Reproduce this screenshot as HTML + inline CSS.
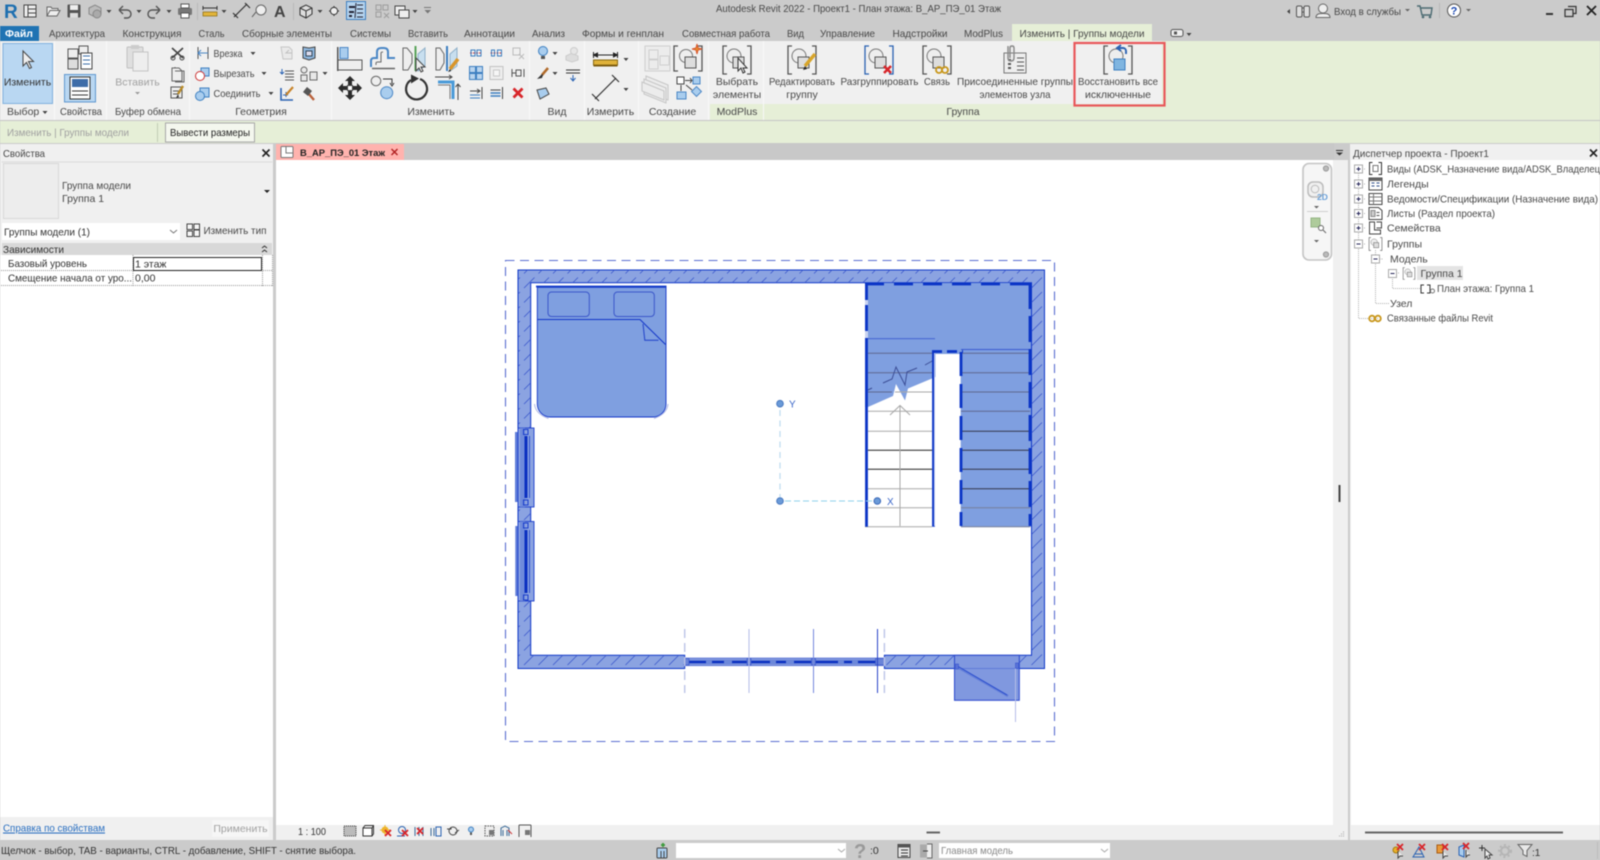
<!DOCTYPE html>
<html lang="ru"><head><meta charset="utf-8"><title>Autodesk Revit 2022</title>
<style>
html,body{margin:0;padding:0;width:1600px;height:860px;overflow:hidden;background:#cbcbcb}
svg{display:block;filter:blur(.4px)}
text{font-family:"Liberation Sans",sans-serif;font-size:10.5px;fill:#484848}
.c{text-anchor:middle}
.g{fill:#a0a0a0}
.ic{fill:none;stroke:#555;stroke-width:1.2}
.bl{fill:#a9cdee;stroke:#4a86c5;stroke-width:1}
.gr{fill:#e4e4e4;stroke:#9a9a9a;stroke-width:1}
.lg{fill:#e8e8e8;stroke:#6a6a6a;stroke-width:1}
.dk{fill:#444}
.tree{font-size:10.5px}
</style></head><body>
<svg width="1600" height="860" viewBox="0 0 1600 860" xmlns="http://www.w3.org/2000/svg">
<defs>
<pattern id="h" width="14.5" height="14.5" patternUnits="userSpaceOnUse"><path d="M2 12.500L12.500 2" stroke="#3552cc" stroke-width=".75"/></pattern>
<g id="grp"><path d="M-10-14h-4v28h4M10-14h4v28h-4" fill="none" stroke="#555" stroke-width="1.3"/><circle cx="-3" cy="-4" r="7" fill="#eee" stroke="#777"/><rect x="-4" y="-3" width="11" height="11" fill="#ddd" stroke="#555"/></g>
<path id="da" d="M-2.5 0h5L0 3z" fill="#444"/>
<g id="plus"><rect x="-4" y="-4" width="8" height="8" fill="#fff" stroke="#aaa"/><path d="M-2 0h4M0-2v4" stroke="#225" stroke-width="1"/></g>
<g id="minus"><rect x="-4" y="-4" width="8" height="8" fill="#fff" stroke="#aaa"/><path d="M-2 0h4" stroke="#225" stroke-width="1"/></g>
<g id="rx"><path d="M-3-3L3 3M3-3L-3 3" stroke="#d8252a" stroke-width="1.8"/></g>
</defs>

<!-- base -->
<rect width="1600" height="860" fill="#cbcbcb"/>
<!-- Title bar -->
<text x="716" y="12" textLength="285" lengthAdjust="spacingAndGlyphs">Autodesk Revit 2022 - Проект1 - План этажа: В_АР_ПЭ_01 Этаж</text>
<!-- Quick access -->
<text x="4" y="18" style="font-size:19px;font-weight:bold;fill:#1d6fb0">R</text>
<g transform="translate(30,11)"><rect x="-6" y="-6" width="12" height="12" fill="#eee" stroke="#444"/><path d="M-2-6v12M-2-2h8M-2 2h8" stroke="#444"/></g>
<path d="M47 16V7h4l1 1.5h6V11M47 16l3-5.5h10l-3 5.5z" fill="#eee" stroke="#666"/>
<g transform="translate(74,11)"><rect x="-6.5" y="-6.5" width="13" height="13" rx="1" fill="#555"/><rect x="-4" y="-6" width="8" height="5" fill="#eee"/><rect x="-4" y="2" width="8" height="4.5" fill="#ddd"/></g>
<g transform="translate(95,11)"><path d="M-6-3l6-3 6 3v6l-6 3-6-3z" fill="#bbb" stroke="#888"/><circle cx="2" cy="3" r="4" fill="#aaa" stroke="#888"/></g>
<use href="#da" x="109" y="10"/>
<path d="M119 10h8a4 4 0 0 1 0 8h-3M119 10l4-4M119 10l4 4" fill="none" stroke="#555" stroke-width="1.4"/><use href="#da" x="139" y="10"/>
<path d="M160 10h-8a4 4 0 0 0 0 8h3M160 10l-4-4M160 10l-4 4" fill="none" stroke="#555" stroke-width="1.4"/><use href="#da" x="169" y="10"/>
<g transform="translate(185,11)"><rect x="-7" y="-3" width="14" height="7" rx="1.5" fill="#777"/><rect x="-4" y="-7" width="8" height="4" fill="#fff" stroke="#555"/><rect x="-4" y="2" width="8" height="5" fill="#fff" stroke="#555"/></g>
<rect x="197" y="3" width="1" height="17" fill="#b8b8b8"/>
<g transform="translate(210,11)"><path d="M-7-3H7M-7-5v4M7-5v4" stroke="#333"/><rect x="-7" y="1" width="14" height="4" fill="#e2b53a" stroke="#8a6a10" stroke-width=".7"/></g><use href="#da" x="224" y="10"/>
<path d="M234 17l13-13M233 13l5 5M245 3l5 5" stroke="#333" stroke-width="1.2" fill="none"/>
<g transform="translate(260,11)"><path d="M-8 6l4-5" stroke="#555"/><circle cx="1" cy="-1" r="5" fill="#eee" stroke="#666"/></g>
<text x="274" y="17" style="font-size:16px;font-weight:bold;fill:#444">A</text>
<rect x="293" y="3" width="1" height="17" fill="#b8b8b8"/>
<g transform="translate(306,11)"><path d="M-6-3L0-6l6 3v6L0 7l-6-3z" fill="#ddd" stroke="#333"/><path d="M-6-3l6 3 6-3M0 0v7" fill="none" stroke="#333"/></g><use href="#da" x="320" y="10"/>
<g transform="translate(334,11)"><path d="M-5 0h10M0-5v10" stroke="#333"/><circle r="3.6" fill="#eee" stroke="#333"/></g>
<rect x="346.5" y="1.5" width="19" height="18" fill="#b5d3ee" stroke="#3d7fc0"/><path d="M349 6h6v2h-6zM349 11h5v2h-5zM349 15h3v2h-3z" fill="#223"/><path d="M357 5h6M357 9h6M357 13h6M357 17h6M356 3l-1 15" stroke="#223" fill="none"/>
<g transform="translate(382,11)" opacity=".55"><rect x="-6" y="-6" width="5" height="5" fill="#ccc" stroke="#777"/><rect x="1" y="-6" width="5" height="5" fill="#ccc" stroke="#777"/><rect x="-6" y="1" width="5" height="5" fill="#ccc" stroke="#777"/><path d="M2 2l5 5M7 2l-5 5" stroke="#777"/></g>
<g transform="translate(402,11)"><rect x="-7" y="-5" width="10" height="9" fill="#eee" stroke="#444"/><rect x="-3" y="-1" width="10" height="8" fill="#eee" stroke="#444"/></g><use href="#da" x="415" y="10"/>
<path d="M424 7h7v1h-7z" fill="#777"/><path d="M424.5 10h6.5l-3.3 3.5z" fill="#777"/>

<!-- Top-right -->
<path d="M1290 9l-3 2.5 3 2.5z" fill="#444"/>
<g transform="translate(1303,11)" fill="#ddd" stroke="#555"><rect x="-6.5" y="-5" width="5.5" height="11" rx="1.5"/><rect x="1" y="-5" width="5.5" height="11" rx="1.5"/><rect x="-1" y="-3" width="2" height="4"/></g>
<g transform="translate(1323,11)"><circle cy="-2.5" r="4.5" fill="#eee" stroke="#666"/><path d="M-7 6.5c0-4 4-4 7-4s7 0 7 4z" fill="#eee" stroke="#666"/></g>
<text x="1334" y="15" textLength="67" lengthAdjust="spacingAndGlyphs">Вход в службы</text><path d="M1405 9h5l-2.5 2.5z" fill="#666"/>
<g transform="translate(1425,11)"><path d="M-8-5l3 0 2 9h9l1-7h-11" fill="none" stroke="#4c6b72" stroke-width="1.4"/><circle cx="-2" cy="6" r="1.3" fill="#4c6b72"/><circle cx="5" cy="6" r="1.3" fill="#4c6b72"/></g>
<rect x="1439" y="3" width="1" height="15" fill="#b8b8b8"/>
<circle cx="1454" cy="10.5" r="6.5" fill="#fff" stroke="#555"/><text class="c" x="1454" y="14.5" style="font-weight:bold;font-size:11px;fill:#1846b0">?</text><path d="M1466 9h5l-2.5 2.5z" fill="#666"/>
<rect x="1546" y="13" width="7" height="2" fill="#333"/>
<path d="M1565 9.5h8v7h-8zM1568 6.5h8v7h-3" fill="none" stroke="#333" stroke-width="1.2"/>
<path d="M1587 6l9 9M1596 6l-9 9" stroke="#222" stroke-width="1.8"/>

<!-- Tabs -->
<rect x="0" y="26" width="39" height="15" fill="#1f73b3"/>
<text class="c" x="19" y="37" style="fill:#fff;font-weight:bold">Файл</text>
<rect x="1012" y="24" width="140" height="17" fill="#e6efd7"/>
<text x="49" y="37" textLength="56" lengthAdjust="spacingAndGlyphs">Архитектура</text>
<text x="122.5" y="37" textLength="59" lengthAdjust="spacingAndGlyphs">Конструкция</text>
<text x="198.5" y="37" textLength="26" lengthAdjust="spacingAndGlyphs">Сталь</text>
<text x="242" y="37" textLength="90" lengthAdjust="spacingAndGlyphs">Сборные элементы</text>
<text x="350" y="37" textLength="41" lengthAdjust="spacingAndGlyphs">Системы</text>
<text x="408" y="37" textLength="40" lengthAdjust="spacingAndGlyphs">Вставить</text>
<text x="464" y="37" textLength="51" lengthAdjust="spacingAndGlyphs">Аннотации</text>
<text x="532" y="37" textLength="33" lengthAdjust="spacingAndGlyphs">Анализ</text>
<text x="582" y="37" textLength="82" lengthAdjust="spacingAndGlyphs">Формы и генплан</text>
<text x="682" y="37" textLength="88" lengthAdjust="spacingAndGlyphs">Совместная работа</text>
<text x="787" y="37" textLength="17" lengthAdjust="spacingAndGlyphs">Вид</text>
<text x="820" y="37" textLength="55" lengthAdjust="spacingAndGlyphs">Управление</text>
<text x="892.5" y="37" textLength="55" lengthAdjust="spacingAndGlyphs">Надстройки</text>
<text x="964" y="37" textLength="39" lengthAdjust="spacingAndGlyphs">ModPlus</text>
<text x="1019.5" y="37" textLength="125" lengthAdjust="spacingAndGlyphs">Изменить | Группы модели</text>
<g transform="translate(1177,33)"><rect x="-6" y="-3.5" width="12" height="7" rx="2" fill="#eee" stroke="#555"/><rect x="-3" y="-1.5" width="3" height="3" fill="#555"/></g><use href="#da" x="1189" y="33"/>

<!-- Ribbon -->
<rect x="0" y="41" width="1600" height="80" fill="#e6efd7"/>
<rect x="0" y="41" width="710" height="79" fill="#f0f0f0"/>
<rect x="710" y="41" width="452" height="63" fill="#f0f0f0"/>
<rect x="0" y="120" width="1600" height="1" fill="#c6c6c6"/>
<rect x="0" y="121" width="1600" height="22" fill="#e6efd7"/>
<g fill="#f8f8f8"><rect x="54" y="41" width="1" height="79"/><rect x="106" y="41" width="1" height="79"/><rect x="189" y="41" width="1" height="79"/><rect x="331" y="41" width="1" height="79"/><rect x="529" y="41" width="1" height="79"/><rect x="584" y="41" width="1" height="79"/><rect x="638" y="41" width="1" height="79"/><rect x="708" y="41" width="1" height="79"/><rect x="763" y="41" width="1" height="79"/></g>

<!-- Изменить button -->
<rect x="3" y="43.5" width="49.5" height="60" fill="#b9d7f2" stroke="#81b1dd"/>
<path d="M23 51v15l3.5-3.5 3 6 2-1-3-6h5z" fill="#eee" stroke="#444"/>
<text class="c" x="27.5" y="85.5" style="fill:#333">Изменить</text>
<text x="7" y="115">Выбор</text><use href="#da" x="45" y="111"/>

<!-- Свойства -->
<g transform="translate(80,58)"><rect x="-12" y="-9" width="10" height="9" fill="#eee" stroke="#555"/><rect x="-1" y="-12" width="9" height="8" fill="#eee" stroke="#555"/><rect x="-12" y="1" width="10" height="10" fill="#ddd" stroke="#555"/><rect x="1" y="-5" width="11" height="16" fill="#fff" stroke="#444"/><path d="M3-2h7M3 2h7M3 6h7" stroke="#3a6ea8"/></g>
<rect x="64.5" y="74.5" width="31" height="27.5" fill="#b9d7f2" stroke="#5f97cf"/>
<rect x="70" y="77" width="20" height="22" fill="#fff" stroke="#333"/><rect x="72" y="79" width="16" height="8" fill="#3f6da8"/><path d="M72 91h16M72 95h16" stroke="#333"/>
<text x="60" y="115" textLength="42" lengthAdjust="spacingAndGlyphs">Свойства</text>

<!-- Буфер -->
<g><rect x="127" y="47" width="16" height="21" rx="1" fill="#dfdfdf" stroke="#c0c0c0"/><rect x="133" y="52" width="15" height="19" fill="#eee" stroke="#c4c4c4"/><rect x="131" y="45" width="8" height="4" fill="#ccc"/></g>
<text class="c g" x="137.5" y="85.5">Вставить</text><path d="M135 92h5l-2.5 2.5z" fill="#999"/>
<path d="M172 48l11 10M183 48l-11 10" stroke="#444" stroke-width="1.6"/><circle cx="173" cy="58" r="2" fill="none" stroke="#444"/><circle cx="182" cy="58" r="2" fill="none" stroke="#444"/>
<path d="M172 68h7l3 3v10h-10zM175 68v-1M175 71h9v11h-9" fill="#eee" stroke="#666"/>
<g transform="translate(177,93)"><rect x="-6" y="-6" width="11" height="11" fill="#eee" stroke="#555"/><path d="M-4-2h7M-4 1h5" stroke="#555"/><path d="M6-7L1 1" stroke="#b88b2a" stroke-width="2.4"/><path d="M1 1l-2 4 3-1z" fill="#333"/></g>
<text x="115" y="115" textLength="66" lengthAdjust="spacingAndGlyphs">Буфер обмена</text>

<!-- Геометрия -->
<g transform="translate(203,53)"><path d="M-5-6v12M5-6v12" stroke="#555"/><path d="M-5 0h10M-2-3l-3 3 3 3" fill="none" stroke="#4a86c5"/></g><text x="213.5" y="57" textLength="29" lengthAdjust="spacingAndGlyphs">Врезка</text><use href="#da" x="253" y="52"/>
<g transform="translate(202,74)"><rect x="-1" y="-6" width="8" height="8" fill="#a9cdee" stroke="#3d7fc0"/><circle cx="-2" cy="2" r="4.5" fill="#fff" stroke="#c33"/></g><text x="213.5" y="77" textLength="41" lengthAdjust="spacingAndGlyphs">Вырезать</text><use href="#da" x="264" y="72"/>
<g transform="translate(202,94)"><rect x="-2" y="-6" width="9" height="9" fill="#a9cdee" stroke="#3d7fc0"/><circle cx="-2" cy="2" r="4.5" fill="#a9cdee" stroke="#3d7fc0"/></g><text x="213.5" y="97" textLength="47" lengthAdjust="spacingAndGlyphs">Соединить</text><use href="#da" x="271" y="92"/>
<g transform="translate(287,53)"><path d="M-6-6h8l3 3v9h-9z" fill="#e9e9e9" stroke="#c6c6c6"/><path d="M5 0H-1l3-3" fill="none" stroke="#c0c0c0"/></g>
<g transform="translate(309,53)"><path d="M-6-6l6 1 6-1v11l-6 2-6-2z" fill="#8fb7de" stroke="#444"/><rect x="-3" y="-2" width="6" height="5" fill="#dde" stroke="#345"/></g>
<g transform="translate(287,74)" stroke="#555" fill="none"><path d="M-2-3h9M-2 0h9M-2 3h9M-2 6h9" /><path d="M-5-5l0 5M-7-2l2 2 2-2" stroke="#2a62b2"/></g>
<g transform="translate(308,74)"><circle cx="-4" cy="-4" r="3" class="lg"/><rect x="-7" y="1" width="6" height="6" class="lg"/><rect x="2" y="-2" width="7" height="8" class="lg"/></g><use href="#da" x="325" y="72"/>
<g transform="translate(287,94)"><path d="M-6-6v12h12" fill="none" stroke="#2a62b2" stroke-width="1.6"/><path d="M-4 1h5M-1-2v5" stroke="#2a62b2"/><path d="M6-7L-1 1" stroke="#c8842a" stroke-width="2.2"/></g>
<g transform="translate(309,94)"><path d="M-1-1l6 7" stroke="#b9603a" stroke-width="2.4"/><path d="M-6-2l4-5 5 4-4 5z" fill="#555"/></g>
<text class="c" x="261" y="115">Геометрия</text>

<!-- Изменить panel -->
<rect x="340" y="47.5" width="8" height="11" class="bl"/><rect x="338" y="60" width="24" height="10" fill="#eee" stroke="#555"/><rect x="337" y="47" width="1.5" height="24" fill="#555"/>
<path d="M371 67v-6q0-3 3-3h3v-6q0-4 4-4h3q4 0 4 4v6h7" fill="none" stroke="#4a86c5" stroke-width="2"/><path d="M372 68.500h23" stroke="#666" stroke-width="1.5"/><path d="M376 65v-2q0-1 2-1h3v-9q0-1 2-1" fill="none" stroke="#666"/>
<path d="M403 48h4l5 6v9l-4 7h-5z" fill="#eee" stroke="#666"/><rect x="414.5" y="46" width="2" height="25" fill="#58a35a"/><path d="M418 54l7-6v18l-7 5z" fill="#c8dfef" stroke="#8fb0c9"/><path d="M416 58v13l3-3 2 4 2-1-2-4h4z" fill="#eee" stroke="#444"/>
<path d="M436 48h4l4 6v9l-4 7h-4z" fill="#eee" stroke="#666"/><rect x="446" y="46" width="2" height="25" fill="#3d7fc0"/><path d="M450 54l7-6v18l-7 5z" fill="#c8dfef" stroke="#8fb0c9"/><path d="M458 59l-8 10" stroke="#d8952a" stroke-width="3.5"/><path d="M450 69l-2 3 3-1z" fill="#222"/>
<g transform="translate(350,88)" fill="#2b2b2b"><path d="M-2-3V-7h-3l5-5 5 5H2v4zM-2 3V7h-3l5 5 5-5H2V3zM-3-2H-7v-3l-5 5 5 5V2h4zM3-2H7v-3l5 5-5 5V2H3z"/><rect x="-2.5" y="-2.5" width="5" height="5" fill="#fff" stroke="#444"/></g>
<circle cx="376" cy="81" r="4.8" fill="#eee" stroke="#666"/><circle cx="386.700" cy="92.700" r="6" class="bl"/><path d="M383 79h9v5M390 83l2 3 2-3" fill="none" stroke="#333"/>
<path d="M420 79a10.500 10.500 0 1 1-9 1" fill="none" stroke="#333" stroke-width="2.2"/><path d="M411 74.500l8 4-8 5z" fill="#333"/>
<path d="M438 82h15v17" fill="none" stroke="#4a9ad8" stroke-width="3"/><path d="M435 77h17M449 75l3 2-3 2M458 100V84M455.500 87l2.500-3 2.500 3" fill="none" stroke="#444"/><path d="M438 85h12v14" fill="none" stroke="#777"/>
<g transform="translate(476,53)"><path d="M-6 0h12" stroke="#c33" stroke-dasharray="2 1"/><rect x="-5" y="-3" width="4" height="6" fill="none" stroke="#3d7fc0"/><rect x="1" y="-3" width="4" height="6" fill="none" stroke="#3d7fc0"/></g>
<g transform="translate(496.5,53)"><path d="M-6 0h12" stroke="#c33" stroke-dasharray="2 1"/><rect x="-5" y="-3" width="3" height="6" fill="none" stroke="#3d7fc0"/><rect x="1" y="-3" width="4" height="6" fill="none" stroke="#3d7fc0"/></g>
<g transform="translate(518,53)" opacity=".6"><path d="M-5-5h7v7h-7z" fill="none" stroke="#999"/><path d="M1 1l5 5M6 1L1 6" stroke="#999"/></g>
<g transform="translate(476,73)" fill="#b9d4ee" stroke="#3d7fc0"><rect x="-6.5" y="-6.5" width="6" height="6"/><rect x=".5" y="-6.5" width="6" height="6"/><rect x="-6.5" y=".5" width="6" height="6"/><rect x=".5" y=".5" width="6" height="6"/></g>
<g transform="translate(496.5,73)"><rect x="-6.5" y="-6.5" width="13" height="13" fill="#eee" stroke="#c2c2c2"/><rect x="-3" y="-3" width="6" height="6" fill="#f6f6f6" stroke="#c8c8c8"/></g>
<g transform="translate(518,73)" fill="none" stroke="#555"><rect x="-2" y="-3" width="5" height="6"/><path d="M-6-4v8M6-4v8M-6 0h4"/></g>
<g transform="translate(476,93)" stroke="#444" fill="none"><path d="M6-6V6M-6-2h10M1-4l3 2-3 2"/><path d="M-6 2h10M-6 5h10" stroke="#3d7fc0"/></g>
<g transform="translate(496.5,93)" stroke="#444" fill="none"><path d="M6-6V6M-6-3h10"/><path d="M-6 0h10M-6 3h10" stroke="#3d7fc0" stroke-width="1.5"/></g>
<use href="#rx" x="518" y="93" transform="translate(-259,-46.5) scale(1.5)"/>
<text class="c" x="431" y="115">Изменить</text>

<!-- Вид -->
<g transform="translate(543,53)"><circle cy="-2" r="4.5" fill="#a9cdee" stroke="#3d7fc0"/><rect x="-2" y="3" width="4" height="3" fill="#555"/></g><use href="#da" x="555" y="52"/>
<g transform="translate(543,74)"><path d="M5-6L-1 1" stroke="#b06a2a" stroke-width="2.5"/><path d="M-1 0l-5 5 5-1 1-3z" fill="#333"/></g><use href="#da" x="555" y="72"/>
<g transform="translate(543,94)"><path d="M-6-4l9-2 3 6-9 5z" fill="#a9cdee" stroke="#444"/></g>
<g transform="translate(572,54)" opacity=".5"><path d="M-6 2l6-3 6 3v4l-6 2-6-2z" fill="#ccc" stroke="#aaa"/><circle cx="2" cy="-3" r="3.5" fill="#ddd" stroke="#aaa"/></g>
<g transform="translate(573,74)"><path d="M-7-4H7M-7-1H7" stroke="#333"/><path d="M0 1v5M-2.5 4L0 7l2.500-3" stroke="#2a62b2" fill="none"/></g>
<text class="c" x="557" y="115">Вид</text>

<!-- Измерить -->
<g transform="translate(605.5,62)"><path d="M-12-7h24M-12-10v6M12-10v6M-12-7l4-2v4zM12-7l-4-2v4z" stroke="#222" fill="#222"/><rect x="-12" y="-2" width="24" height="5" fill="#e0b23a" stroke="#8a6a10"/><rect x="-12" y="3" width="24" height="1.5" fill="#7a5a10"/></g><use href="#da" x="626" y="58"/>
<path d="M595 99l21-21M592 94l7 7M612 75l7 7" stroke="#333" stroke-width="1.2" fill="none"/><use href="#da" x="626" y="88"/>
<text class="c" x="610.5" y="115">Измерить</text>

<!-- Создание -->
<g fill="#ececec" stroke="#cfcfcf"><rect x="645" y="46" width="25" height="25"/><rect x="649" y="50" width="9" height="9"/><rect x="649" y="60" width="9" height="9"/><rect x="660" y="56" width="9" height="9"/></g>
<g transform="translate(688,58)"><path d="M-10-12h-4v25h4M10-12h4v25h-4" fill="none" stroke="#555" stroke-width="1.3"/><circle cx="-2" cy="-2" r="6.5" fill="#eee" stroke="#777"/><rect x="-3" y="-1" width="11" height="11" fill="#ddd" stroke="#555"/><path d="M10-10l-1-4-1 4-4 1 4 1 1 4 1-4 4-1z" fill="#e8952a" stroke="#d8552a"/></g>
<g fill="#ececec" stroke="#c6c6c6"><path d="M646 76l22 9v15l-22-9z"/><path d="M644 79l22 9v15l-22-9z"/><path d="M642 82l22 9v9l-22-9z"/></g>
<g transform="translate(688,88)"><rect x="-11" y="-11" width="7" height="7" fill="#fff" stroke="#444"/><rect x="5" y="-11" width="7" height="7" class="bl"/><path d="M-3-7.5h7M2-10l2 2.5-2 2.5" stroke="#444" fill="none"/><rect x="-11" y="4" width="9" height="7" class="bl"/><rect x="5" y="0" width="7" height="7" transform="rotate(45 8.5 3.5)" class="bl"/><path d="M-7-3v6M-2-3l6 5" stroke="#444" fill="none"/></g>
<text class="c" x="672.5" y="115">Создание</text>

<!-- Right buttons -->
<use href="#grp" x="737" y="60"/><path d="M738 58v13l3-3 2 5 2-1-2-4h4z" fill="#eee" stroke="#333"/>
<text class="c" x="737" y="85">Выбрать</text><text class="c" x="737" y="98">элементы</text>
<text class="c" x="737" y="115">ModPlus</text>
<use href="#grp" x="802" y="60"/><path d="M815 54l-10 12" stroke="#d8a52a" stroke-width="3.5"/><path d="M805 66l-2 4 4-1z" fill="#222"/>
<text class="c" x="802" y="85" textLength="66" lengthAdjust="spacingAndGlyphs">Редактировать</text><text class="c" x="802" y="98">группу</text>
<g transform="translate(879,60)"><path d="M-10-14h-4v28h4M10-14h4v28h-4" fill="none" stroke="#2a62b2" stroke-width="1.3"/><circle cx="-3" cy="-4" r="7" fill="#eee" stroke="#777"/><rect x="-4" y="-3" width="11" height="11" fill="#ddd" stroke="#555"/><path d="M5 6l7 7M12 6l-7 7" stroke="#d8252a" stroke-width="2.5"/></g>
<text class="c" x="879.5" y="85" textLength="78" lengthAdjust="spacingAndGlyphs">Разгруппировать</text>
<use href="#grp" x="937" y="60"/><g fill="none" stroke="#c8961a" stroke-width="1.8"><circle cx="939" cy="70" r="3"/><circle cx="945" cy="70" r="3"/></g>
<text class="c" x="937" y="85" textLength="26" lengthAdjust="spacingAndGlyphs">Связь</text>
<g transform="translate(1015,60)"><rect x="-11" y="-7" width="22" height="20" fill="#eee" stroke="#777"/><path d="M2-2h7M2 2h7M2 6h7M2 10h7" stroke="#555"/><rect x="-7" y="-1" width="3" height="2" fill="#555"/><rect x="-7" y="3" width="3" height="2" fill="#555"/><rect x="-7" y="7" width="3" height="2" fill="#555"/><path d="M-7-14v12q0 3 3 3t3-3v-10q0-2-2-2t-2 2v10" fill="none" stroke="#888" stroke-width="1.4"/></g>
<text class="c" x="1015" y="85" textLength="116" lengthAdjust="spacingAndGlyphs">Присоединенные группы</text><text class="c" x="1015" y="98" textLength="71" lengthAdjust="spacingAndGlyphs">элементов узла</text>
<g transform="translate(1118,60)"><path d="M-10-14h-4v28h4M10-14h4v28h-4" fill="none" stroke="#555" stroke-width="1.3"/><circle cx="-2" cy="-4" r="7" fill="#eee" stroke="#777"/><rect x="-4" y="-1" width="11" height="11" fill="#7fb5e0" stroke="#3d7fc0"/><path d="M8-6V-9a3 3 0 0 0-3-3H0M3-15l-4 3 4 3" fill="none" stroke="#2a62b2" stroke-width="1.9"/></g>
<text class="c" x="1118" y="85" textLength="80" lengthAdjust="spacingAndGlyphs">Восстановить все</text><text class="c" x="1118" y="98" textLength="66" lengthAdjust="spacingAndGlyphs">исключенные</text>
<text class="c" x="963" y="115">Группа</text>
<rect x="1074.5" y="43" width="90" height="62.5" fill="none" stroke="#e8575a" stroke-width="2.2"/>

<!-- Option bar -->
<text class="g" x="7" y="136" textLength="122" lengthAdjust="spacingAndGlyphs">Изменить | Группы модели</text>
<rect x="157" y="123" width="1" height="19" fill="#c2cdb4"/>
<rect x="165.5" y="123" width="89" height="19" fill="#f4f7ee" stroke="#a8a8a8"/>
<text class="c" x="210" y="136" style="fill:#222" textLength="80" lengthAdjust="spacingAndGlyphs">Вывести размеры</text>

<!-- Properties -->
<rect x="0" y="144" width="273" height="696" fill="#f0f0f0"/>
<text x="3" y="157" textLength="42" lengthAdjust="spacingAndGlyphs">Свойства</text>
<path d="M262.5 149.5l7 7M269.5 149.5l-7 7" stroke="#222" stroke-width="1.6"/>
<rect x="1.5" y="161.5" width="271" height="1" fill="#dcdcdc"/>
<rect x="3.5" y="163.5" width="55" height="55" fill="#ededed" stroke="#d8d8d8"/>
<text x="62" y="189" textLength="69" lengthAdjust="spacingAndGlyphs">Группа модели</text>
<text x="62" y="202">Группа 1</text>
<path d="M264 190h6l-3 3z" fill="#222"/>
<rect x="2" y="223" width="178" height="17" fill="#fff"/>
<text x="4" y="235.5" style="fill:#333" textLength="86" lengthAdjust="spacingAndGlyphs">Группы модели (1)</text>
<path d="M170 230l3.5 3 3.5-3" fill="none" stroke="#777"/>
<g transform="translate(193,230)" fill="#f6f6f6" stroke="#444"><rect x="-6" y="-6" width="5.5" height="5.5"/><rect x="1" y="-6" width="5.5" height="5.5"/><rect x="-6" y="1" width="5.5" height="5.5"/><rect x="1" y="0" width="5.5" height="6.5"/></g>
<text x="203.5" y="234" textLength="63" lengthAdjust="spacingAndGlyphs">Изменить тип</text>
<rect x="2" y="243" width="270" height="12" fill="#d8d8d8"/>
<text x="3" y="253" style="fill:#333" textLength="61" lengthAdjust="spacingAndGlyphs">Зависимости</text>
<path d="M262 248l2.5-2 2.5 2M262 252l2.5-2 2.5 2" fill="none" stroke="#333"/>
<rect x="0" y="255" width="273" height="562" fill="#fff"/>
<rect x="0" y="817" width="273" height="23" fill="#f0f0f0"/>
<path d="M1 270.5h272M1 285.5h272M133 255v31M262.5 255v31M272.5 255v31" stroke="#999" stroke-dasharray="1 1" fill="none"/>
<rect x="133.5" y="257.5" width="128" height="13" fill="#fff" stroke="#222"/>
<text x="8" y="267" style="fill:#333" textLength="79" lengthAdjust="spacingAndGlyphs">Базовый уровень</text>
<text x="135" y="267.5" style="fill:#333">1 этаж</text>
<text x="8" y="281.5" style="fill:#333" textLength="124" lengthAdjust="spacingAndGlyphs">Смещение начала от уро...</text>
<text x="135" y="281.5" style="fill:#333">0,00</text>
<text x="3" y="831.5" style="fill:#2a6fc0;text-decoration:underline" textLength="102" lengthAdjust="spacingAndGlyphs">Справка по свойствам</text>
<rect x="212" y="820" width="57" height="17" rx="1" fill="#f6f6f6"/>
<text class="c g" x="240.5" y="832">Применить</text>
<rect x="273" y="144" width="3" height="696" fill="#cbcbcb"/>

<!-- Document area -->
<rect x="276" y="143" width="1058" height="17" fill="#c8c8c8"/>
<rect x="276" y="144" width="128" height="16" fill="#ffb3ae"/>
<g transform="translate(287,152)"><rect x="-6" y="-5.5" width="12" height="11" rx="1" fill="#fff" stroke="#777"/><path d="M-1-5v6H6" fill="none" stroke="#777"/></g>
<text x="300" y="156" style="fill:#222;font-weight:bold;font-size:9.5px" textLength="85" lengthAdjust="spacingAndGlyphs">В_АР_ПЭ_01 Этаж</text>
<path d="M391.5 149l6 6M397.5 149l-6 6" stroke="#b02020" stroke-width="1.4"/>
<path d="M1336 150h7v1h-7zM1336 152.5h7l-3.5 3z" fill="#333"/>
<rect x="276" y="160" width="1057" height="665" fill="#fff"/>
<rect x="1333" y="160" width="15" height="680" fill="#f0f0f0"/>
<rect x="276" y="825" width="1072" height="15" fill="#f0f0f0"/>
<rect x="1338.5" y="485" width="2" height="17" fill="#444"/>
<rect x="926.5" y="831.5" width="13.5" height="2" fill="#666"/>
<path d="M1339 836h1M1341 836h1M1343 836h1M1341 834h1M1343 834h1M1343 832h1" stroke="#aaa"/>
<rect x="1348" y="143" width="2" height="697" fill="#cbcbcb"/>

<!-- View bar -->
<text x="298" y="835" style="fill:#333" textLength="28" lengthAdjust="spacingAndGlyphs">1 : 100</text>
<g transform="translate(350,831)"><rect x="-6" y="-5" width="12" height="10" fill="#bbb" stroke="#333" stroke-dasharray="1 1"/></g>
<g transform="translate(368,831)"><rect x="-5" y="-3" width="9" height="8" fill="#fff" stroke="#333"/><path d="M-5-3l2-2.5h8.5V3l-1.500 2M4-3l1.500-2.500" fill="none" stroke="#333"/></g>
<g transform="translate(385,830)"><circle r="3.5" fill="#eeb52a"/><path d="M-5 0h10M0-5v10" stroke="#eeb52a"/><use href="#rx" x="3" y="3"/></g>
<g transform="translate(402,831)"><circle cy="-1" r="3.5" fill="none" stroke="#2a62b2"/><path d="M-5 5h8" stroke="#2a62b2"/><use href="#rx" x="3" y="2"/></g>
<g transform="translate(419,831)"><path d="M-4 5V-4M0 5V-4M4 5V-4" stroke="#3a6a98"/><use href="#rx" x="1" y="0"/></g>
<g transform="translate(436,831)"><path d="M-5 5V-3M-2 5V-3" stroke="#3a6a98"/><rect y="-4" width="5" height="9" fill="none" stroke="#2a62b2"/></g>
<g transform="translate(453,831)"><circle r="4" fill="none" stroke="#444"/><path d="M-6-2h4v-2M2 2l4-3" stroke="#444" fill="none"/></g>
<g transform="translate(471,831)"><circle cy="-1.5" r="2.5" fill="#a9cdee" stroke="#3d7fc0"/><rect x="-1" y="1.5" width="2" height="2.5" fill="#555"/></g>
<g transform="translate(490,831)"><rect x="-5" y="-5" width="9" height="10" fill="#eee" stroke="#555" stroke-dasharray="1.5 1"/><rect x="-1" y="-1" width="5" height="5" fill="#777"/></g>
<g transform="translate(506,831)"><path d="M-5 5V-3L-1-5l4 2v8M-3 5v-6M1 5v-6" fill="none" stroke="#3a6a98"/><path d="M2-1l4 4" stroke="#c33"/></g>
<g transform="translate(525,831)"><path d="M-6-6h12M-6 6V-6M6 6V-6" stroke="#555"/><rect x="0" y="-1" width="5" height="5" fill="#777"/></g>

<!-- Drawing -->
<rect x="505.5" y="260.5" width="549" height="481" fill="none" stroke="#5a6ed0" stroke-width="1.1" stroke-dasharray="9 5.5"/>

<!-- Walls -->
<path d="M684.7 668.5H518V270H1044.5V668.5H884.4V655.3H1031.5V282.7H530.7V655.3H684.7Z" fill="#8ba3e1" stroke="#0f37c8" stroke-width="1"/>
<path d="M684.7 668.5H518V270H1044.5V668.5H884.4V655.3H1031.5V282.7H530.7V655.3H684.7Z" fill="url(#h)"/>

<!-- Window south -->
<rect x="684.7" y="658" width="199.7" height="7.7" fill="#7c93dc" stroke="#5a74d6" stroke-width=".7"/>
<path d="M688 662H881" stroke="#0a2fc0" stroke-width="2.4"/>
<path d="M706 662h6M724 662h8M770 662h6M786 662h8M838 662h6M852 662h6" stroke="#6f8cdc" stroke-width="2.4"/>
<g fill="#6a84d8" stroke="#3a58cc" stroke-width=".7"><rect x="685" y="658.5" width="4" height="6.5"/><rect x="747" y="658.5" width="4" height="6.5"/><rect x="811.5" y="658.5" width="4" height="6.5"/><rect x="875.5" y="658.5" width="9" height="6.5"/></g>
<path d="M684.7 629V693" stroke="#bcc4e8" stroke-width="1.4" stroke-dasharray="9 5"/><path d="M884.4 629V693" stroke="#bcc4e8" stroke-width="1.4" stroke-dasharray="9 5"/>
<path d="M749 629V693" stroke="#b3bce6" stroke-width="1"/><path d="M813.5 629V693" stroke="#7587dc" stroke-width="1"/><path d="M877.5 629V693" stroke="#2b44c8" stroke-width="1"/>

<!-- West windows -->
<g>
<rect x="515" y="432" width="5" height="70" fill="#5f7cd8"/>
<rect x="518" y="428" width="16" height="79" fill="#8ba3e1" stroke="#1a3ecb" stroke-width=".9"/>
<rect x="520" y="428" width="5" height="79" fill="#6f8bdb"/>
<rect x="524.5" y="436" width="3" height="62" fill="#0a2fc0"/>
<path d="M529.500 436V498" stroke="#1a3ecb" stroke-width=".8"/>
<rect x="523.5" y="429.5" width="4.5" height="5" fill="none" stroke="#1a3ecb"/><rect x="523.5" y="500" width="4.5" height="5" fill="none" stroke="#1a3ecb"/>
</g>
<g>
<rect x="515.3" y="526" width="5" height="70" fill="#5f7cd8"/>
<rect x="518" y="521.5" width="16" height="79.5" fill="#8ba3e1" stroke="#1a3ecb" stroke-width=".9"/>
<rect x="520" y="521.5" width="5" height="79.500" fill="#6f8bdb"/>
<rect x="524.5" y="530" width="3" height="63" fill="#0a2fc0"/>
<path d="M529.500 530V593" stroke="#1a3ecb" stroke-width=".8"/>
<rect x="523.5" y="523" width="4.5" height="5" fill="none" stroke="#1a3ecb"/><rect x="523.5" y="595" width="4.5" height="5" fill="none" stroke="#1a3ecb"/>
</g>

<!-- Door -->
<rect x="954.5" y="655.3" width="64.8" height="45" fill="#8098df" stroke="#2a48cc" stroke-width="1"/>
<path d="M955 668.500H1019" stroke="#5f7bd8" stroke-width=".9"/>
<path d="M957.5 667L1008 696" stroke="#5f7bd8" stroke-width="2.4"/><path d="M957.5 666L1007 695" stroke="#0f37c8" stroke-width=".6"/>
<rect x="955.5" y="664" width="3" height="5" fill="#5a74d6" stroke="#2a48cc" stroke-width=".5"/>
<rect x="1015.5" y="663" width="3" height="5.5" fill="#5a74d6" stroke="#2a48cc" stroke-width=".5"/>
<path d="M1015.5 668.5V722" stroke="#b5bde8" stroke-width="1"/>

<!-- Bed -->
<path d="M537.3 287.3H666V404a13 13 0 0 1-13 13H550.3a13 13 0 0 1-13-13Z" fill="#7f9fe0" stroke="#1235c8" stroke-width=".9"/>
<path d="M536 286.5H666.5" stroke="#0f37c8" stroke-width="1.8"/>
<rect x="548" y="292" width="41.3" height="24.5" rx="3.5" fill="none" stroke="#3a56c9" stroke-width="1"/>
<rect x="614" y="292" width="40.3" height="24.5" rx="3.5" fill="none" stroke="#3a56c9" stroke-width="1"/>
<path d="M537.3 319.5H640L665.5 344.5" fill="none" stroke="#1235c8" stroke-width="1"/>
<path d="M643 324L644.8 340.3H658.5" fill="none" stroke="#1f40c8" stroke-width="1"/>
<path d="M534.5 404q1 10 14 14.5M668 404q-1 10-14 14.5" fill="none" stroke="#aab4e4" stroke-width="1"/>

<!-- Stairs fill -->
<path d="M865 283H1031V526.7H960.7V354H935.5V377L908 388.5 905 400.5 896 384 893 396 868 407H865Z" fill="#7f9fe0"/>
<!-- treads -->
<g stroke="#a8a8a8" stroke-width="1"><path d="M895 392H932M868 411.3H932M868 431.3H932M868 488.7H932M868 507.7H932M865 526.7H932"/></g>
<g stroke="#222" stroke-width="1"><path d="M868 450.3H932M868 469.3H932"/></g>
<g stroke="#5f6890" stroke-width="1"><path d="M868 353.3H932M868 372.7H932M868 392H892M961 353.3H1030M961 372.7H1030M961 392H1030M961 411.3H1030"/></g>
<g stroke="#33364a" stroke-width="1"><path d="M961 431.3H1030M961 450.3H1030M961 469.3H1030M961 488.7H1030"/></g>
<path d="M961 507.7H1030M961 526.7H1030" stroke="#777e9a" stroke-width="1"/>
<path d="M865 338.7H935M961 349.5H1031" stroke="#3a5ad0" stroke-width=".9"/>
<path d="M900 526V406M890 415L900 405.5 910 415" fill="none" stroke="#a8a8a8" stroke-width="1"/>
<path d="M868 390L872 388M883 383L892 379 896 367 905 385 907 372 917 368M925 365L934 360" fill="none" stroke="#3c4e96" stroke-width="1"/>
<!-- thick stair walls -->
<g stroke="#0a34c6" stroke-width="2.8" fill="none">
<path d="M866.5 283V526.7"/>
<path d="M865 284H1032" stroke-dasharray="19 10"/>
<path d="M1030 283V526" stroke-dasharray="26 7"/>
<path d="M933.5 352V526.7"/>
<path d="M932 351.5H963" stroke-dasharray="10 5"/>
<path d="M961 352V526" stroke-dasharray="24 8"/>
</g>
<path d="M866.5 300V305M866.5 331V338" stroke="#c8d2f0" stroke-width="3"/>
<path d="M934.5 353V526" stroke="#fff" stroke-width=".7"/>

<!-- Origin -->
<path d="M780 410V497" stroke="#bcdcef" stroke-width="1.2" stroke-dasharray="6 4.5"/>
<path d="M785 501H872" stroke="#8fd0ec" stroke-width="1" stroke-dasharray="6 3"/>
<circle cx="780" cy="403.7" r="3.3" fill="#6a9ad8" stroke="#4878c0"/>
<circle cx="780" cy="501" r="3.3" fill="#6a9ad8" stroke="#4878c0"/>
<circle cx="877.3" cy="501" r="3.3" fill="#6a9ad8" stroke="#3a68b8"/>
<text x="789" y="407.5" style="fill:#3a66c8;font-size:10px">Y</text>
<text x="887" y="505" style="fill:#3a66c8;font-size:10px">X</text>

<!-- Steering wheel -->
<rect x="1303" y="163.5" width="28.5" height="96.5" rx="6" fill="#f6f6f6" stroke="#c4c4c4" stroke-width="1.6"/>
<circle cx="1326" cy="168.5" r="2.6" fill="#bbb" stroke="#999"/><circle cx="1326" cy="254.5" r="2.6" fill="#bbb" stroke="#999"/>
<rect x="1308" y="182" width="15" height="15" rx="5" fill="#f0f0f0" stroke="#bbb" stroke-width="1.5"/><circle cx="1315" cy="189" r="3.8" fill="none" stroke="#bbb"/>
<text x="1317" y="200" style="font-size:8.5px;font-weight:bold;fill:#6aa0d8">2D</text>
<path d="M1314 206h5l-2.5 2.5z" fill="#666"/>
<rect x="1307" y="211" width="21" height="1" fill="#cfcfcf"/>
<rect x="1311" y="218" width="9" height="9" fill="#aecb9b" stroke="#94b383"/><circle cx="1321" cy="228" r="2.5" fill="#fff" stroke="#666"/><path d="M1323 230l3 3" stroke="#666"/>
<path d="M1314 240h5l-2.5 2.5z" fill="#666"/>

<!-- Project browser -->
<rect x="1350" y="144" width="250" height="696" fill="#f0f0f0"/>
<rect x="1351" y="160" width="249" height="665" fill="#fff"/>
<text x="1353" y="157" textLength="136" lengthAdjust="spacingAndGlyphs">Диспетчер проекта - Проект1</text>
<path d="M1590 149.5l7 7M1597 149.5l-7 7" stroke="#222" stroke-width="1.6"/>
<path d="M1358.5 169V318.5H1378M1358 169h8M1358 184h8M1358 199h8M1358 213.5h8M1358 228h8M1358 244h8M1375.5 250V303.5H1389M1375.5 259h8M1392.5 279V288.5H1420M1392 273h8" fill="none" stroke="#b0b0b0" stroke-dasharray="1 1"/>
<use href="#plus" x="1358.5" y="169"/><use href="#plus" x="1358.5" y="184"/><use href="#plus" x="1358.5" y="199"/><use href="#plus" x="1358.5" y="213.5"/><use href="#plus" x="1358.5" y="228"/><use href="#minus" x="1358.5" y="244"/><use href="#minus" x="1375.5" y="259"/><use href="#minus" x="1392.5" y="273.5"/>
<g transform="translate(1375.5,168.5)"><path d="M-3-6h-3v12h3M3-6h3v12h-3" fill="none" stroke="#333"/><rect x="-2.5" y="-3" width="5" height="6" fill="none" stroke="#777"/></g>
<g transform="translate(1375.5,184)"><rect x="-6.5" y="-6" width="13" height="12" fill="#fff" stroke="#444"/><rect x="-6.5" y="-6" width="13" height="3" fill="#666"/><path d="M-4-1h3M1-1h3M-4 2h3M1 2h3" stroke="#2a4a88"/></g>
<g transform="translate(1375.5,199)"><rect x="-6.5" y="-5.5" width="13" height="11" fill="#fff" stroke="#444"/><path d="M-6.5-2h13M-6.5 2h13M-2-5.5v11" stroke="#777"/></g>
<g transform="translate(1375.5,213.5)"><path d="M-6.5-6H3l3.5 3v9h-13z" fill="#fff" stroke="#444"/><rect x="-4.5" y="-3" width="4" height="6" fill="#ccc" stroke="#888"/><path d="M1-1h3M1 2h3" stroke="#555"/></g>
<g transform="translate(1375.5,228)"><path d="M-6 6V-6h5v8h6V6zM1-6h5v6H1" fill="#fff" stroke="#444"/></g>
<use href="#grp" transform="translate(1375.5,244) scale(.46)"/>
<use href="#grp" transform="translate(1409,273.5) scale(.42)"/>
<g transform="translate(1426,289)"><path d="M-2-4h-3v8h3M1-4h3v8H1" fill="none" stroke="#333"/><circle cx="6.5" cy="2" r="2" fill="none" stroke="#777"/></g>
<g fill="none" stroke="#c8961a" stroke-width="1.8"><circle cx="1372" cy="318.5" r="2.8"/><circle cx="1378" cy="318.5" r="2.8"/></g>
<rect x="1417" y="266" width="46" height="14" fill="#e4e4e4"/>
<g class="tree">
<text x="1387" y="172.5" textLength="213" lengthAdjust="spacingAndGlyphs">Виды (ADSK_Назначение вида/ADSK_Владелец</text>
<text x="1387" y="187.5">Легенды</text>
<text x="1387" y="202.5" textLength="211" lengthAdjust="spacingAndGlyphs">Ведомости/Спецификации (Назначение вида)</text>
<text x="1387" y="217" textLength="108" lengthAdjust="spacingAndGlyphs">Листы (Раздел проекта)</text>
<text x="1387" y="231.5">Семейства</text>
<text x="1387" y="247.5">Группы</text>
<text x="1390" y="262.5">Модель</text>
<text x="1420.5" y="277">Группа 1</text>
<text x="1437" y="292" textLength="97" lengthAdjust="spacingAndGlyphs">План этажа: Группа 1</text>
<text x="1390" y="307">Узел</text>
<text x="1387" y="321.5" textLength="106" lengthAdjust="spacingAndGlyphs">Связанные файлы Revit</text>
</g>
<rect x="1365" y="831.5" width="198" height="2" fill="#666"/>

<!-- Status bar -->
<rect x="0" y="840" width="1600" height="20" fill="#cbcbcb"/>
<text x="1" y="854" style="fill:#333" textLength="355" lengthAdjust="spacingAndGlyphs">Щелчок - выбор, TAB - варианты, CTRL - добавление, SHIFT - снятие выбора.</text>
<g transform="translate(662,851)"><rect x="-5" y="-3" width="10" height="10" rx="1" fill="#a9cdee" stroke="#444"/><path d="M-1 7V0M2 7V0" stroke="#444"/><path d="M-1-6h4M1-8v4" stroke="#3c9a3c" stroke-width="1.8"/></g>
<rect x="676" y="843" width="170" height="15" fill="#fff"/>
<path d="M838 849l3.5 3 3.5-3" fill="none" stroke="#aaa"/>
<text x="854" y="858" style="font-size:20px;font-weight:bold;fill:#999">?</text>
<text x="870" y="854" style="fill:#333">:0</text>
<g transform="translate(904,851)"><rect x="-6" y="-6.5" width="12" height="13" fill="#e8e8e8" stroke="#444"/><rect x="-6" y="-6.5" width="12" height="3" fill="#555"/><path d="M-3-1h7M-3 2h7M-3 5h7" stroke="#333"/></g>
<g transform="translate(926,851)"><rect x="-6" y="-6.5" width="11" height="13" fill="#aaa"/><path d="M1-7h5v14H1" fill="#eee" stroke="#666"/><path d="M-3 0h5" stroke="#444"/></g>
<rect x="939" y="843" width="171" height="15" fill="#fff"/>
<text x="941" y="854" style="fill:#888" textLength="72" lengthAdjust="spacingAndGlyphs">Главная модель</text>
<path d="M1101 849l3.5 3 3.5-3" fill="none" stroke="#aaa"/>
<g transform="translate(1397,851)"><circle cx="-1" cy="-1" r="3" fill="#e8b32a" stroke="#a87a10"/><path d="M1 0v7l2-2h3" fill="#eee" stroke="#444"/><use href="#rx" x="3" y="-4"/></g>
<g transform="translate(1419,851)"><path d="M-6 6L0-4l5 10z" fill="none" stroke="#2a62b2"/><path d="M-4 3h7" stroke="#2a62b2"/><use href="#rx" x="3" y="-4"/></g>
<g transform="translate(1442,851)"><rect x="-5" y="-6" width="6" height="8" fill="#e89a3a" stroke="#a85a10"/><path d="M1 0v7l2-2h3" fill="#eee" stroke="#444"/><use href="#rx" x="3" y="-4"/></g>
<g transform="translate(1463,851)"><path d="M-4-4l5-2v12l-5-2z" fill="#a9cdee" stroke="#2a62b2"/><path d="M3-1v7l2-2h2" fill="#eee" stroke="#444"/><use href="#rx" x="3" y="-5"/></g>
<g transform="translate(1485,851)"><path d="M-6-3h6M-3-6v6" stroke="#333"/><path d="M0-2v9l2-2 1 3 2-1-1-3h3z" fill="#eee" stroke="#444"/></g>
<g transform="translate(1505,851)"><circle r="4" fill="none" stroke="#b5b5b5" stroke-width="2"/><circle r="6" fill="none" stroke="#b5b5b5" stroke-dasharray="2 2.5" stroke-width="2"/></g>
<path d="M1518 844.5h14l-5 6v6l-4-2v-4z" fill="#e8e8e8" stroke="#666"/>
<text x="1532" y="856" style="fill:#333;font-size:10px">:1</text>
<rect x="1597" y="842" width="1" height="17" fill="#bbb"/>
</svg>
</body></html>
